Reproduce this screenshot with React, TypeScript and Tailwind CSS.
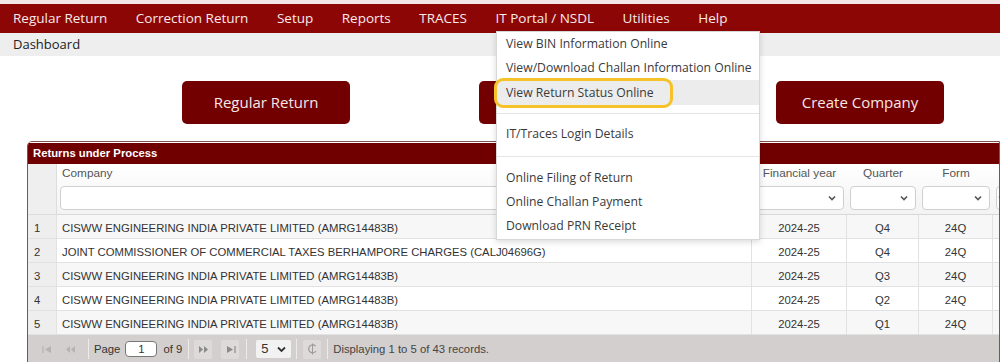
import React from "react";

const navItems = ["Regular Return", "Correction Return", "Setup", "Reports", "TRACES", "IT Portal / NSDL", "Utilities", "Help"];

const rows = [
  ["1", "CISWW ENGINEERING INDIA PRIVATE LIMITED (AMRG14483B)", "2024-25", "Q4", "24Q"],
  ["2", "JOINT COMMISSIONER OF COMMERCIAL TAXES BERHAMPORE CHARGES (CALJ04696G)", "2024-25", "Q4", "24Q"],
  ["3", "CISWW ENGINEERING INDIA PRIVATE LIMITED (AMRG14483B)", "2024-25", "Q3", "24Q"],
  ["4", "CISWW ENGINEERING INDIA PRIVATE LIMITED (AMRG14483B)", "2024-25", "Q2", "24Q"],
  ["5", "CISWW ENGINEERING INDIA PRIVATE LIMITED (AMRG14483B)", "2024-25", "Q1", "24Q"],
];

const Chevron = () => (
  <svg width="10" height="10" viewBox="0 0 10 10" className="text-[#555]">
    <path d="M2 3.5 L5 6.5 L8 3.5" fill="none" stroke="currentColor" strokeWidth="1.6" />
  </svg>
);

const FilterSelect = () => (
  <div className="h-[24px] mx-[3px] rounded-[4px] border border-[#cfcfcf] bg-white flex items-center justify-end pr-[6px]">
    <Chevron />
  </div>
);

const PagerIcon = ({ d, faded, cls }: { d: React.ReactNode; faded?: boolean; cls: string }) => (
  <div className={`${cls} h-[19px] flex items-center justify-center rounded-[2px] ${faded ? "opacity-40" : "bg-[#dedad9]"}`}>
    <svg width="11" height="9" viewBox="0 0 11 9" className="text-[#8a8a8a]">
      {d}
    </svg>
  </div>
);

const Divider = ({ cls }: { cls: string }) => <div className={`${cls} w-px h-[20px] bg-[#b9b4b3] border-r border-[#eeeae9]`} />;

export default function App() {
  return (
    <div className="w-[1000px] h-[362px] overflow-hidden bg-white relative" style={{ fontFamily: "'Open Sans', sans-serif" }}>
      <div className="h-[4px] bg-[#f3e6e6]" />
      <div className="h-[29px] bg-[#8d0606] flex items-center pl-[13px] gap-[28.5px] text-[13.5px] text-[#f6eaea]">
        {navItems.map((n) => (
          <span key={n}>{n}</span>
        ))}
      </div>
      <div className="h-[23px] bg-[#eeeeee] flex items-center pl-[13px] text-[13px] text-[#222]">Dashboard</div>

      <div className="pt-[25px] pl-[182px] flex gap-[129px]">
        {["Regular Return", "", "Create Company"].map((b, i) => (
          <div key={i} className="w-[168px] h-[43px] rounded-[5px] bg-[#730000] text-[#f6e7e7] text-[15px] flex items-center justify-center">
            {b}
          </div>
        ))}
      </div>

      <div className="mt-[17px] ml-[27px] border border-[#7b5555] rounded-tl-[5px] overflow-hidden" style={{ fontFamily: "'Liberation Sans', Arial, sans-serif" }}>
        <div className="border-t border-white">
          <div className="h-[21px] bg-[#700000] text-white font-bold text-[11.3px] flex items-center pl-[5px]">Returns under Process</div>
        </div>
        <div className="grid grid-cols-[29px_695px_95px_72px_74px_1fr] text-[11.3px] text-[#333]">
          <div className="h-[51px] bg-[#efefef] border-r border-[#dddddd] border-b" />
          <div className="h-[51px] bg-gradient-to-b from-white to-[#f3f3f3] border-b border-[#d8d8d8] pt-[2px]">
            <div className="pl-[5px] text-[#555] text-[11.8px] leading-[14px]">Company</div>
            <div className="mt-[6px] ml-[3px] h-[24px] rounded-[4px] border border-[#cfcfcf] bg-white" />
          </div>
          <div className="h-[51px] bg-gradient-to-b from-white to-[#f3f3f3] border-b border-[#d8d8d8] pt-[2px]">
            <div className="text-center text-[#555] text-[11.8px] leading-[14px]">Financial year</div>
            <div className="mt-[6px]"><FilterSelect /></div>
          </div>
          <div className="h-[51px] bg-gradient-to-b from-white to-[#f3f3f3] border-b border-[#d8d8d8] pt-[2px]">
            <div className="text-center text-[#555] text-[11.8px] leading-[14px]">Quarter</div>
            <div className="mt-[6px]"><FilterSelect /></div>
          </div>
          <div className="h-[51px] bg-gradient-to-b from-white to-[#f3f3f3] border-b border-[#d8d8d8] pt-[2px]">
            <div className="text-center text-[#555] text-[11.8px] leading-[14px]">Form</div>
            <div className="mt-[6px]"><FilterSelect /></div>
          </div>
          <div className="h-[51px] bg-gradient-to-b from-white to-[#f3f3f3] border-b border-[#d8d8d8] pt-[2px]">
            <div className="mt-[20px]"><FilterSelect /></div>
          </div>
          {rows.map((r, i) => {
            const bg = i % 2 === 0 ? "bg-[#f7f7f7]" : "bg-white";
            return (
              <React.Fragment key={i}>
                <div className="h-[24px] bg-[#eeeeee] border-b border-r border-[#e2e2e2] flex items-center pt-[3px] pl-[6px]">{r[0]}</div>
                <div className={`h-[24px] ${bg} border-b border-r border-[#e2e2e2] flex items-center pt-[3px] pl-[5px] whitespace-nowrap`}>{r[1]}</div>
                <div className={`h-[24px] ${bg} border-b border-r border-[#e2e2e2] flex items-center pt-[3px] justify-center`}>{r[2]}</div>
                <div className={`h-[24px] ${bg} border-b border-r border-[#e2e2e2] flex items-center pt-[3px] justify-center`}>{r[3]}</div>
                <div className={`h-[24px] ${bg} border-b border-r border-[#e2e2e2] flex items-center pt-[3px] justify-center`}>{r[4]}</div>
                <div className={`h-[24px] ${bg} border-b border-[#e2e2e2]`} />
              </React.Fragment>
            );
          })}
        </div>
        <div className="h-[40px] bg-[#d3cfce] pt-[4px] text-[11.3px] text-[#333]">
          <div className="flex items-center h-[20px]">
            <PagerIcon cls="ml-[10px] w-[19px]" faded d={<><path d="M1 1 V8" stroke="currentColor" strokeWidth="1.2" /><path d="M9 1 L3 4.5 L9 8 Z" fill="currentColor" /></>} />
            <PagerIcon cls="ml-[4px] w-[19px]" faded d={<><path d="M5 1 L1 4.5 L5 8 Z" fill="currentColor" /><path d="M10 1 L6 4.5 L10 8 Z" fill="currentColor" /></>} />
            <Divider cls="ml-[8px]" />
            <span className="ml-[5px]">Page</span>
            <div className="ml-[5px] w-[32px] h-[16px] rounded-[4px] border border-[#777] bg-white flex items-center justify-center">1</div>
            <span className="ml-[6px]">of 9</span>
            <Divider cls="ml-[6px]" />
            <PagerIcon cls="ml-[5px] w-[18px]" d={<><path d="M1 1 L5 4.5 L1 8 Z" fill="currentColor" /><path d="M6 1 L10 4.5 L6 8 Z" fill="currentColor" /></>} />
            <PagerIcon cls="ml-[9px] w-[18px]" d={<><path d="M2 1 L8 4.5 L2 8 Z" fill="currentColor" /><path d="M10 1 V8" stroke="currentColor" strokeWidth="1.2" /></>} />
            <Divider cls="ml-[7px]" />
            <div className="ml-[9px] w-[35px] h-[18px] bg-[#f2f2f2] rounded-[2px] flex items-center justify-between px-[5px] text-[13px]">
              <span>5</span>
              <svg width="9" height="7" viewBox="0 0 9 7"><path d="M1 1.5 L4.5 5 L8 1.5" fill="none" stroke="#333" strokeWidth="1.8" /></svg>
            </div>
            <Divider cls="ml-[5px]" />
            <div className="ml-[6px] w-[18px] h-[19px] bg-[#dedad9] rounded-[2px] flex items-center justify-center">
              <svg width="11" height="12" viewBox="0 0 11 12"><path d="M8.5 3 A4 4 0 1 0 9 8" fill="none" stroke="#9a9a9a" strokeWidth="1.2" /><path d="M5.5 0.5 V11.5" stroke="#9a9a9a" strokeWidth="1" /></svg>
            </div>
            <Divider cls="ml-[6px]" />
            <span className="ml-[5px] text-[#444]">Displaying 1 to 5 of 43 records.</span>
          </div>
        </div>
      </div>

      <div className="absolute left-[496px] top-[31px] w-[264px] bg-white border border-[#d7d7d7] shadow-[0_2px_6px_rgba(0,0,0,0.15)] text-[12.2px] text-[#3a3a3a]">
        <div className="h-[24px] flex items-center pl-[9px]">View BIN Information Online</div>
        <div className="h-[24px] flex items-center pl-[9px]">View/Download Challan Information Online</div>
        <div className="h-[25px] flex items-center pl-[9px] pt-[1px] bg-[#ececec]">View Return Status Online</div>
        <div className="h-[8px]" />
        <div className="border-t border-[#e5e5e5]" />
        <div className="h-[33px] flex items-center pl-[9px] pt-[8px]">IT/Traces Login Details</div>
        <div className="h-[9px]" />
        <div className="border-t border-[#e5e5e5]" />
        <div className="h-[9px]" />
        <div className="h-[24px] flex items-center pl-[9px]">Online Filing of Return</div>
        <div className="h-[24px] flex items-center pl-[9px]">Online Challan Payment</div>
        <div className="h-[24px] flex items-center pl-[9px]">Download PRN Receipt</div>
        <div className="h-[1px]" />
      </div>
      <div className="absolute left-[494px] top-[78px] w-[179px] h-[30px] rounded-[9px] border-[3px] border-[#f6c22a]" />
    </div>
  );
}
